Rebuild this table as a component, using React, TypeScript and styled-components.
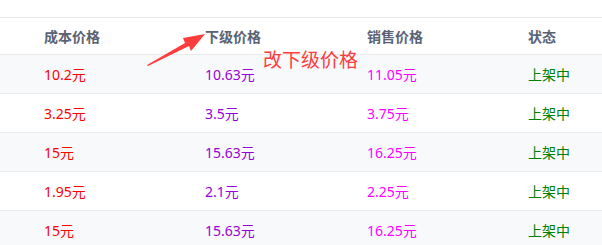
import React from 'react';
import styled, {createGlobalStyle} from "styled-components";

const GlobalStyle = createGlobalStyle`
  body {
    margin: 0;
    background: #fff;
    font-family: "Noto Sans", "Noto Sans CJK SC", sans-serif;
  }
`

const StyledWrapper = styled.div`
  position: relative;
  width: 602px;
  height: 245px;
  overflow: hidden;
  background: #fff;
  padding-top: 17px;
  box-sizing: border-box;
`

const StyledTable = styled.div`
  border-top: 1px solid #e8eaec;
`

const StyledRow = styled.div<{ $striped?: boolean, $head?: boolean }>`
  display: grid;
  grid-template-columns: 161px 162px 161px 1fr;
  align-items: center;
  padding-left: 44px;
  height: ${props => props.$head ? "36px" : "38px"};
  border-bottom: 1px solid #e8eaec;
  background: ${props => props.$striped ? "#f8f9fb" : "#fff"};
  font-size: 14px;
`

const StyledHeadCell = styled.div`
  color: #5a6273;
  font-weight: bold;
  white-space: nowrap;
`

const StyledCell = styled.div<{ $color: string }>`
  color: ${props => props.$color};
  white-space: nowrap;
`

const StyledNote = styled.div`
  position: absolute;
  left: 263px;
  top: 45px;
  font-size: 19px;
  color: #ff3c3c;
  white-space: nowrap;
`

const StyledArrow = styled.svg`
  position: absolute;
  left: 0;
  top: 0;
`

const rows = [
    {cost: "10.2元", sub: "10.63元", sale: "11.05元"},
    {cost: "3.25元", sub: "3.5元", sale: "3.75元"},
    {cost: "15元", sub: "15.63元", sale: "16.25元"},
    {cost: "1.95元", sub: "2.1元", sale: "2.25元"},
    {cost: "15元", sub: "15.63元", sale: "16.25元"},
]

const App: React.FC = () => {
    return (
        <StyledWrapper>
            <GlobalStyle/>
            <StyledTable>
                <StyledRow $head>
                    <StyledHeadCell>{"成本价格"}</StyledHeadCell>
                    <StyledHeadCell>{"下级价格"}</StyledHeadCell>
                    <StyledHeadCell>{"销售价格"}</StyledHeadCell>
                    <StyledHeadCell>{"状态"}</StyledHeadCell>
                </StyledRow>
                {rows.map((row, index) => (
                    <StyledRow key={index} $striped={index % 2 === 0}>
                        <StyledCell $color={"#ff0000"}>{row.cost}</StyledCell>
                        <StyledCell $color={"#9900d6"}>{row.sub}</StyledCell>
                        <StyledCell $color={"#ff00ff"}>{row.sale}</StyledCell>
                        <StyledCell $color={"#008000"}>{"上架中"}</StyledCell>
                    </StyledRow>
                ))}
            </StyledTable>
            <StyledArrow width={602} height={245}>
                <polygon points="147,65 185,43 183,38 205,34 191,51 189,46 148,66" fill="#ff3c3c"/>
            </StyledArrow>
            <StyledNote>{"改下级价格"}</StyledNote>
        </StyledWrapper>
    );
};

export default App;
